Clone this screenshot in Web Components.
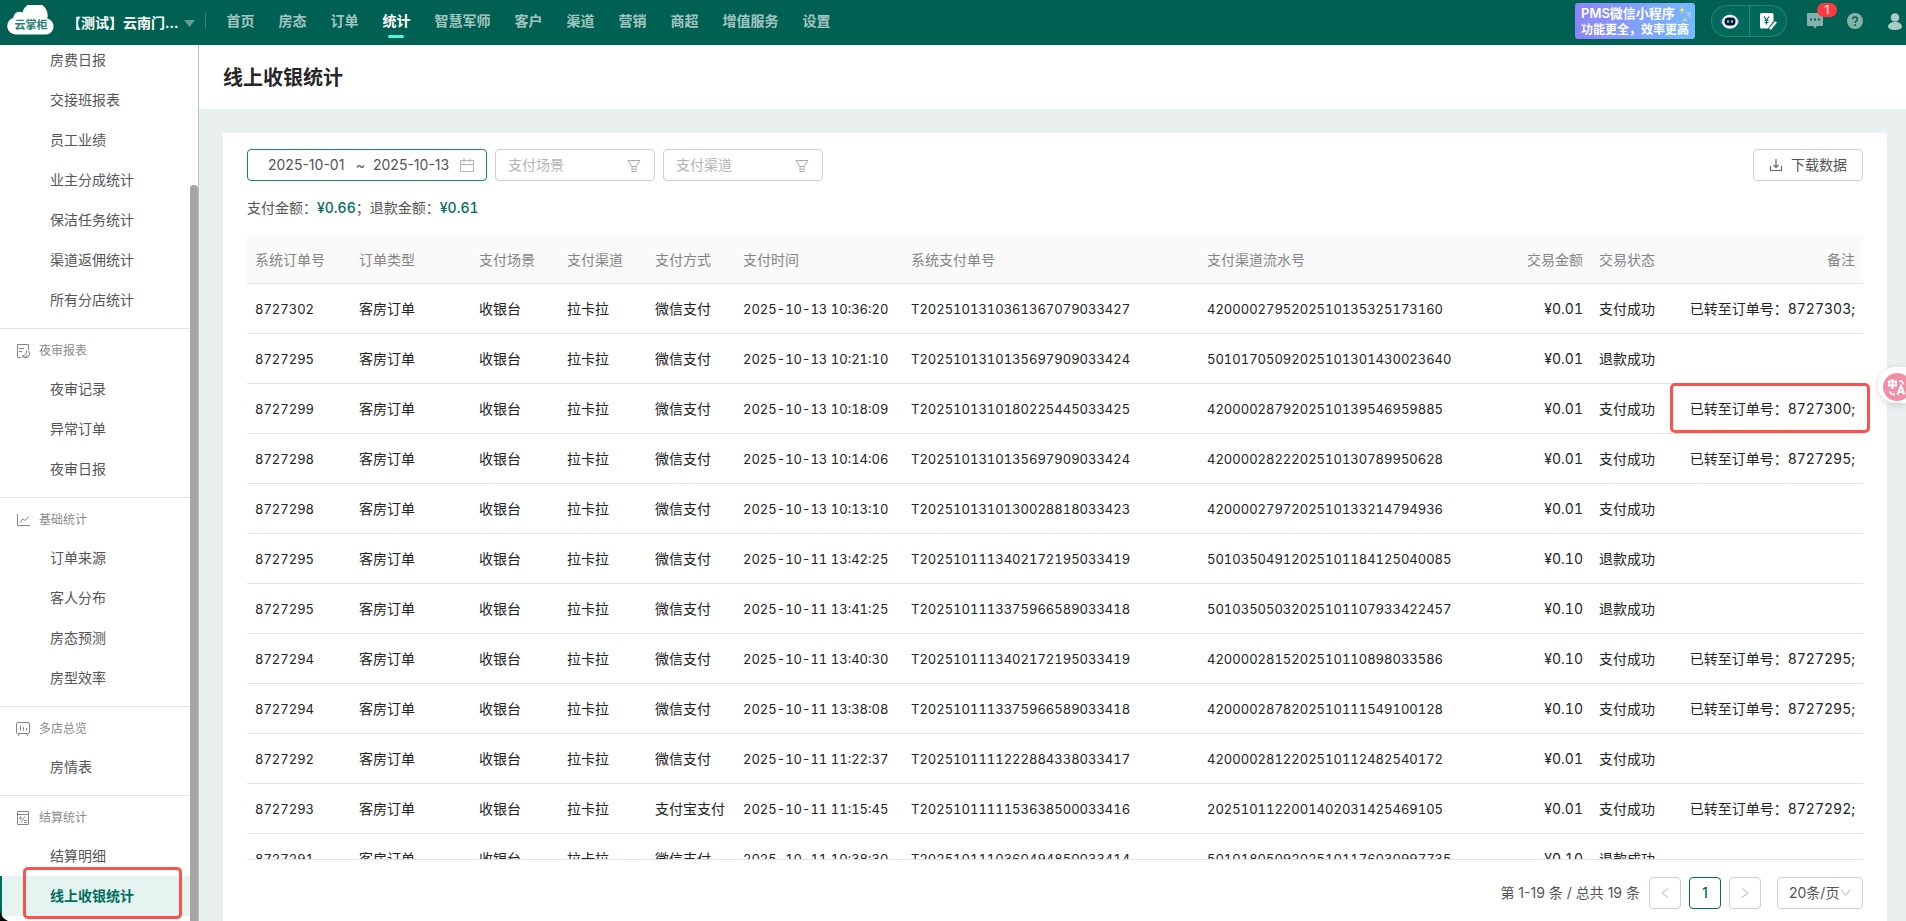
<!DOCTYPE html>
<html lang="zh-CN">
<head>
<meta charset="utf-8">
<title>线上收银统计</title>
<style>
  html, body { margin: 0; height: 100%; }
  body {
    font: 14px/22px Inter, "Noto Sans CJK SC", sans-serif;
    color: #222;
    --brand: #006152;
    --accent: #006e5d;
    --line: #e3e3e3;
    --edge: #cfcfcf;
    --mark: #ff514b;
    overflow: hidden;
  }
</style>
</head>
<body>
<pms-app></pms-app>

<template id="t-app">
  <style>
    :host { display: flex; flex-direction: column; height: 100vh; overflow: hidden; position: relative; }
    .body { flex: 1; min-height: 0; display: flex; }
    main { flex: 1; min-width: 0; display: flex; flex-direction: column; background: #eaf0f0; }
    h1 { box-sizing: border-box; margin: 0; height: 64px; padding: 1px 24px 0; background: #fff; font-size: 20px; line-height: 64px; font-weight: 600; color: #262626; }
    pms-report { flex: 1; min-height: 0; margin: 24px 19px 0 24px; }
    pms-translate { position: absolute; right: 0; top: 367px; }
    .corner { position: absolute; left: 0; bottom: 0; display: block; }
  </style>
  <pms-header></pms-header>
  <div class="body">
    <pms-sidebar></pms-sidebar>
    <main>
      <h1>线上收银统计</h1>
      <pms-report></pms-report>
    </main>
  </div>
  <pms-translate></pms-translate>
  <svg class="corner" width="8" height="11" aria-hidden="true"><path d="M0 0Q1 8 8 11H0Z" fill="#000a0a"/></svg>
</template>

<template id="t-header">
  <style>
    :host { display: flex; align-items: center; height: 45px; flex: none; background: var(--brand); color: #fff; position: relative; overflow: hidden; }
    a { color: inherit; text-decoration: none; }
    .logo { display: block; margin-left: 7px; width: 48px; height: 30px; margin-top: -5px; }
    .logo svg { display: block; }
    .store { all: unset; cursor: pointer; display: flex; align-items: center; gap: 6px; margin-left: 12px; height: 41px; font-weight: 600; }
    .store svg { margin-top: 1px; }
    .sep { width: 1px; height: 16px; background: rgba(255,255,255,.2); margin: -4px 20px 0 10px; }
    nav { display: flex; gap: 24px; align-self: stretch; }
    .right { margin-left: auto; display: flex; align-items: center; height: 42px; align-self: flex-start; }
    .promo { box-sizing: border-box; width: 120px; height: 36px; border-radius: 3px; padding: 2px 0 0 6px; background: linear-gradient(90deg, #8f83fb, #74bafd); position: relative; font-weight: 600; white-space: nowrap; }
    .promo span { display: block; font-size: 12px; line-height: 15px; }
    .promo span:first-child { font-size: 13px; line-height: 17px; }
    .promo svg { position: absolute; right: 4px; top: 2px; }
    .pill { box-sizing: border-box; display: flex; width: 76px; height: 32px; border: 1px solid rgba(255,255,255,.16); border-radius: 16px; background: rgba(0,120,100,.35); margin-left: 16px; }
    button { all: unset; cursor: pointer; display: flex; align-items: center; justify-content: center; }
    .pill button { flex: 1; }
    .pill button + button { border-left: 1px solid rgba(255,255,255,.16); }
    .icon { opacity: .62; }
    .msg { position: relative; margin-left: 20px; }
    .badge { position: absolute; left: 10px; top: -10px; width: 20px; height: 14px; border-radius: 7px; background: #ff3b42; font-size: 12px; line-height: 14px; text-align: center; }
    .help { margin-left: 24px; }
    .user { margin: 0 4px 0 25px; }
  </style>
  <a class="logo" href="#" aria-label="云掌柜">
    <svg width="48" height="30" viewBox="0 0 48 30"><path d="M8.500 29.500A8.500 8.500 0 0 1 6.500 12.800 6 6 0 0 1 15.500 7.500 12.500 12.500 0 0 1 40.300 13.500 8.200 8.200 0 0 1 40 29.500Z" fill="#fff"/><text x="24" y="24" text-anchor="middle" font-size="11" font-weight="600" fill="#2b7e72">云掌柜</text></svg>
  </a>
  <button class="store">【测试】云南门...<svg width="11" height="7"><path d="M0 0H11L5.500 7Z" fill="#619d94"/></svg></button>
  <div class="sep"></div>
  <nav>
    <pms-tab>首页</pms-tab><pms-tab>房态</pms-tab><pms-tab>订单</pms-tab><pms-tab active>统计</pms-tab><pms-tab>智慧军师</pms-tab><pms-tab>客户</pms-tab><pms-tab>渠道</pms-tab><pms-tab>营销</pms-tab><pms-tab>商超</pms-tab><pms-tab>增值服务</pms-tab><pms-tab>设置</pms-tab>
  </nav>
  <div class="right">
    <a class="promo" href="#"><span>PMS微信小程序</span><span>功能更全，效率更高</span>
      <svg width="12" height="18"><path d="M3 1 4 4 6 5 4 6 3 9 2 6 0 5 2 4Z" fill="#f0e35c"/><path d="M6 12 7 14 9 15 7 16 6 17 5 16 3 15 5 14Z" fill="#c8d68e"/><path d="M7 7h5v6q-3-1-5-6Z" fill="#fff" opacity=".25"/></svg>
    </a>
    <div class="pill">
      <button aria-label="智能助手"><svg width="20" height="18" viewBox="0 0 20 18"><path d="M10 0v4" stroke="#2b6ea8" stroke-width="1.500"/><rect x="0.500" y="6.500" width="4" height="6" rx="2" fill="#4a63e0"/><rect x="15.500" y="6.500" width="4" height="6" rx="2" fill="#4a63e0"/><ellipse cx="10" cy="9.700" rx="8" ry="7" fill="#f4f6ff"/><rect x="4.500" y="5.500" width="11" height="8" rx="4" fill="#08122e"/><rect x="7" y="8" width="2" height="3" rx="1" fill="#4fe6e0"/><rect x="11" y="8" width="2" height="3" rx="1" fill="#4fe6e0"/></svg></button>
      <button aria-label="记一笔"><svg width="18" height="18" viewBox="0 0 18 18"><path d="M2.500 1H13a1.500 1.500 0 0 1 1.500 1.500V9L9 16.500H2.500A1.500 1.500 0 0 1 1 15V2.500A1.500 1.500 0 0 1 2.500 1Z" fill="#fff"/><path d="M5 4.500 7.500 8 10 4.500M7.500 8V12.500M5.500 8.500H9.500M5.500 10.500H9.500" stroke="#006e5d" stroke-width="1.200" fill="none"/><path d="M17 10.500 12 16.500" stroke="#006c5b" stroke-width="5"/><path d="M16.500 10.500 11.500 16.500" stroke="#fff" stroke-width="2.200" stroke-linecap="round"/></svg></button>
    </div>
    <button class="msg" aria-label="消息，1条未读"><svg class="icon" width="16" height="16"><path fill-rule="evenodd" d="M1 0H15a1 1 0 0 1 1 1V12a1 1 0 0 1-1 1H10L8 15.500 6 13H1a1 1 0 0 1-1-1V1A1 1 0 0 1 1 0ZM3 5.500v2h2v-2ZM7 5.500v2h2v-2ZM11 5.500v2h2v-2Z" fill="#d5e5e2"/></svg><span class="badge">1</span></button>
    <button class="help" aria-label="帮助"><svg class="icon" width="16" height="16"><circle cx="8" cy="8" r="8" fill="#d5e5e2"/><path d="M5.700 6.200a2.300 2.300 0 1 1 3.500 2Q8 8.900 8 10" fill="none" stroke="#006152" stroke-width="1.500"/><circle cx="8" cy="12" r="1" fill="#006152"/></svg></button>
    <button class="user" aria-label="账户"><svg width="14" height="17"><circle cx="7" cy="4.500" r="4.300" fill="#a9cbc6"/><path d="M0 14q0-3.500 4.500-5h5q4.500 1.500 4.500 5Q13 17 7 17T0 14Z" fill="#a9cbc6"/></svg></button>
  </div>
</template>

<template id="t-tab">
  <style>
    :host { display: flex; color: rgba(255,255,255,.65); font-weight: 600; }
    a { color: inherit; text-decoration: none; position: relative; line-height: 42px; white-space: nowrap; }
    :host([active]) { color: #fff; }
    :host([active]) a::after { content: ""; position: absolute; left: 50%; top: 35px; width: 16px; height: 3px; margin-left: -8px; border-radius: 2px; background: #4ff2dc; }
  </style>
  <a href="#"><slot></slot></a>
</template>

<template id="t-sidebar">
  <style>
    :host { box-sizing: border-box; width: 199px; flex: none; display: flex; background: #fff; border-right: 1px solid #bdbdbd; overflow: hidden; }
    nav { flex: 1; display: flex; flex-direction: column; justify-content: flex-end; padding-bottom: 5px; min-width: 0; }
    .track { width: 8px; display: flex; flex-direction: column; justify-content: flex-end; }
    .thumb { height: 84%; background: #a5a5a5; border-radius: 4px 4px 0 0; }
  </style>
  <nav aria-label="统计">
    <pms-group>
      <pms-item>房费日报</pms-item><pms-item>交接班报表</pms-item><pms-item>员工业绩</pms-item><pms-item>业主分成统计</pms-item><pms-item>保洁任务统计</pms-item><pms-item>渠道返佣统计</pms-item><pms-item>所有分店统计</pms-item>
    </pms-group>
    <pms-group heading="夜审报表">
      <svg slot="icon" width="14" height="14" fill="none" stroke="#858585"><path d="M5 13.500H1.500V.5h11V6M3 4.500h5M3 7.500h3"/><path d="M10.500 6.500q1 4-4.500 5.500 1.500 2 5 1.500Q15 11 12.500 7M7.500 13.500q3 0 4-2.500"/></svg>
      <pms-item>夜审记录</pms-item><pms-item>异常订单</pms-item><pms-item>夜审日报</pms-item>
    </pms-group>
    <pms-group heading="基础统计">
      <svg slot="icon" width="14" height="14" fill="none" stroke="#858585"><path d="M1.500 1V12.500H14M4 9.500 6.500 6 9 7.500 12.500 3.500"/></svg>
      <pms-item>订单来源</pms-item><pms-item>客人分布</pms-item><pms-item>房态预测</pms-item><pms-item>房型效率</pms-item>
    </pms-group>
    <pms-group heading="多店总览">
      <svg slot="icon" width="14" height="14" fill="none" stroke="#858585"><rect x=".5" y=".5" width="13" height="11" rx="1.500"/><path d="M4.500 3.500v5M7.500 5v3.500M10.500 6v2.500M4 11.500 2 14M10 11.500 12 14"/></svg>
      <pms-item>房情表</pms-item>
    </pms-group>
    <pms-group heading="结算统计">
      <svg slot="icon" width="14" height="14" fill="none" stroke="#858585"><path d="M1.500 .5h11v13h-11ZM1.500 3.500h11M9 5.500 5 11.500M3 7h3M4.500 5.500v3M8 9.500h3M8 11.500h3"/></svg>
      <pms-item>结算明细</pms-item><pms-item active>线上收银统计</pms-item>
    </pms-group>
  </nav>
  <div class="track"><div class="thumb"></div></div>
</template>

<template id="t-group">
  <style>
    :host { display: block; flex: none; padding-bottom: 8px; }
    :host(:last-child) { padding-bottom: 0; }
    :host([heading]) { border-top: 1px solid var(--line); }
    h2 { display: none; box-sizing: border-box; margin: 0; height: 40px; padding: 4px 0 0 16px; align-items: center; gap: 9px; font-size: 12px; line-height: 36px; font-weight: 400; color: #8a8a8a; }
    :host([heading]) h2 { display: flex; }
  </style>
  <h2><slot name="icon"></slot><span></span></h2>
  <slot></slot>
</template>

<template id="t-item">
  <style>
    :host { display: block; height: 40px; position: relative; box-sizing: border-box; }
    a { display: block; padding-left: 50px; line-height: 40px; color: #555; text-decoration: none; }
    :host([active]) { background: #e5f4f1; box-shadow: inset 2px 0 var(--accent); }
    :host([active]) a { color: var(--accent); font-weight: 600; }
    :host([active])::after { content: ""; position: absolute; box-sizing: border-box; inset: -9px 8px -3px 23px; border: 3px solid var(--mark); border-radius: 5px; }
  </style>
  <a href="#"><slot></slot></a>
</template>

<template id="t-report">
  <style>
    :host { box-sizing: border-box; display: flex; flex-direction: column; background: #fff; padding: 16px 24px 12px; }
    .filters { display: flex; gap: 8px; }
    .download { margin-left: auto; box-sizing: border-box; height: 32px; padding: 0 15px; display: flex; align-items: center; gap: 8px; font: inherit; color: #555; background: #fff; border: 1px solid var(--edge); border-radius: 4px; cursor: pointer; }
    .sum { margin: 16px 0; color: #555; font-variant-numeric: tabular-nums; }
    .sum b { color: var(--accent); font-weight: 500; }
    pms-table { flex: 1; min-height: 0; }
  </style>
  <div class="filters">
    <pms-range></pms-range>
    <pms-select label="支付场景"></pms-select>
    <pms-select label="支付渠道"></pms-select>
    <button class="download"><svg width="14" height="14" fill="none" stroke="#666" stroke-width="1.200"><path d="M1.500 8v4.500h11V8M7 1v8M4.500 7 7 9.500 9.500 7"/></svg>下载数据</button>
  </div>
  <div class="sum">支付金额：<b>¥0.66</b>；退款金额：<b>¥0.61</b></div>
  <pms-table></pms-table>
  <pms-pager></pms-pager>
</template>

<template id="t-range">
  <style>
    :host { box-sizing: border-box; display: flex; align-items: center; width: 240px; height: 32px; border: 1px solid #118672; border-radius: 4px; padding: 0 12px 0 20px; }
    input { all: unset; width: 80px; font: inherit; color: #555; }
    span { width: 25px; text-align: center; color: #555; }
    svg { margin-left: auto; }
  </style>
  <input aria-label="开始日期" value="2025-10-01"><span>~</span><input aria-label="结束日期" value="2025-10-13">
  <svg width="14" height="14" fill="none" stroke="#b5b5b5"><path d="M.5 2.500h13v11H.5ZM.5 6.500h13M4 0v4.500M10 0v4.500"/></svg>
</template>

<template id="t-select">
  <style>
    :host { display: block; position: relative; width: 160px; height: 32px; }
    select { appearance: none; box-sizing: border-box; width: 100%; height: 32px; padding: 0 12px; font: inherit; color: #b3b3b3; background: #fff; border: 1px solid var(--edge); border-radius: 4px; }
    svg { position: absolute; right: 14px; top: 11px; pointer-events: none; }
  </style>
  <select><option></option></select>
  <svg width="14" height="12" fill="none" stroke="#ababab"><path d="M1 .5H13L9 6.500H5ZM5 6.500V11.500H9V6.500M5 9h4"/></svg>
</template>

<template id="t-table">
  <style>
    :host { display: block; box-sizing: border-box; overflow: hidden; padding-right: 8px; margin-right: -8px; font-variant-numeric: tabular-nums; }
    table { width: 100%; table-layout: fixed; border-collapse: separate; border-spacing: 0; }
    th, td { box-sizing: border-box; height: 50px; padding: 0 8px; border-bottom: 1px solid var(--line); text-align: left; font-weight: 400; white-space: nowrap; }
    th { background: #fafafa; color: #858585; height: 49px; padding-top: 2px; }
    .code { font-size: 13px; }
    .num, .note { text-align: right; }
    .note { position: relative; }
    .marked::after { content: ""; position: absolute; inset: -1px -7px 0 auto; width: 200px; box-sizing: border-box; border: 3px solid var(--mark); border-radius: 5px; }
    .c1 { width: 104px; } .c2 { width: 120px; } .c3 { width: 88px; } .c4 { width: 168px; } .c5 { width: 296px; } .c6 { width: 96px; }
  </style>
  <table>
    <colgroup><col class="c1"><col class="c2"><col class="c3"><col class="c3"><col class="c3"><col class="c4"><col class="c5"><col class="c5"><col class="c6"><col class="c3"><col></colgroup>
    <thead><tr><th>系统订单号</th><th>订单类型</th><th>支付场景</th><th>支付渠道</th><th>支付方式</th><th>支付时间</th><th>系统支付单号</th><th>支付渠道流水号</th><th class="num">交易金额</th><th>交易状态</th><th class="note">备注</th></tr></thead>
    <tbody></tbody>
  </table>
</template>

<template id="t-pager">
  <style>
    :host { display: flex; align-items: center; justify-content: flex-end; height: 32px; flex: none; color: #555; border-top: 1px solid var(--line); padding-top: 17px; }
    .total { margin-right: 9px; }
    button { box-sizing: border-box; width: 32px; height: 32px; margin-right: 8px; padding: 0; font: inherit; display: flex; align-items: center; justify-content: center; background: #fff; border: 1px solid var(--edge); border-radius: 4px; }
    .on { color: var(--accent); border-color: var(--accent); font-weight: 500; }
    .size { position: relative; margin-left: 8px; }
    select { appearance: none; box-sizing: border-box; display: block; width: 86px; height: 32px; padding: 0 0 0 11px; font: inherit; color: #555; background: #fff; border: 1px solid var(--edge); border-radius: 4px; }
    .size svg { position: absolute; right: 12px; top: 12px; pointer-events: none; }
  </style>
  <span class="total">第 1-19 条 / 总共 19 条</span>
  <button aria-label="上一页" disabled><svg width="8" height="10" fill="none" stroke="#b5b5b5"><path d="M7 .5 1 5 7 9.500"/></svg></button>
  <button class="on">1</button>
  <button aria-label="下一页" disabled><svg width="8" height="10" fill="none" stroke="#b5b5b5"><path d="M1 .5 7 5 1 9.500"/></svg></button>
  <div class="size"><select aria-label="每页条数"><option>20条/页</option></select><svg width="11" height="8" fill="none" stroke="#b5b5b5"><path d="M1 1 5.500 6.500 10 1"/></svg></div>
</template>

<template id="t-translate">
  <style>
    :host { display: block; }
    button { all: unset; box-sizing: border-box; display: block; width: 28px; height: 36px; padding: 4px 0 0 5px; background: #fff; border-radius: 18px 0 0 18px; box-shadow: 0 2px 8px rgba(0,0,0,.14); overflow: hidden; cursor: pointer; }
    svg { display: block; }
  </style>
  <button aria-label="翻译"><svg width="28" height="28"><circle cx="14" cy="14" r="14" fill="#f08fa5"/><g fill="none" stroke="#fff" stroke-width="2"><path d="M6 8.500h7v4H6ZM9.500 6v10"/><path d="M16 8q4-.5 4.500 3.500M7 18q.5 4 5 3.500" stroke-width="1.800"/><path d="M14.500 21.500 18 13 21.500 21.500M16 19h4"/></g></svg></button>
</template>

<script>
  const define = (name, ready) => customElements.define('pms-' + name, class extends HTMLElement {
    constructor() {
      super();
      this.attachShadow({ mode: 'open' }).append(document.getElementById('t-' + name).content.cloneNode(true));
    }
    connectedCallback() { if (ready) ready(this, this.shadowRoot); }
  });

  // order no., method, time, payment no., channel serial no., amount, state, transferred-to order, highlighted?
  const rows = [
    ['8727302', '微信支付', '2025-10-13 10:36:20', 'T2025101310361367079033427', '4200002795202510135325173160', '¥0.01', '支付成功', '8727303'],
    ['8727295', '微信支付', '2025-10-13 10:21:10', 'T2025101310135697909033424', '50101705092025101301430023640', '¥0.01', '退款成功', ''],
    ['8727299', '微信支付', '2025-10-13 10:18:09', 'T2025101310180225445033425', '4200002879202510139546959885', '¥0.01', '支付成功', '8727300', true],
    ['8727298', '微信支付', '2025-10-13 10:14:06', 'T2025101310135697909033424', '4200002822202510130789950628', '¥0.01', '支付成功', '8727295'],
    ['8727298', '微信支付', '2025-10-13 10:13:10', 'T2025101310130028818033423', '4200002797202510133214794936', '¥0.01', '支付成功', ''],
    ['8727295', '微信支付', '2025-10-11 13:42:25', 'T2025101113402172195033419', '50103504912025101184125040085', '¥0.10', '退款成功', ''],
    ['8727295', '微信支付', '2025-10-11 13:41:25', 'T2025101113375966589033418', '50103505032025101107933422457', '¥0.10', '退款成功', ''],
    ['8727294', '微信支付', '2025-10-11 13:40:30', 'T2025101113402172195033419', '4200002815202510110898033586', '¥0.10', '支付成功', '8727295'],
    ['8727294', '微信支付', '2025-10-11 13:38:08', 'T2025101113375966589033418', '4200002878202510111549100128', '¥0.10', '支付成功', '8727295'],
    ['8727292', '微信支付', '2025-10-11 11:22:37', 'T2025101111222884338033417', '4200002812202510112482540172', '¥0.01', '支付成功', ''],
    ['8727293', '支付宝支付', '2025-10-11 11:15:45', 'T2025101111153638500033416', '2025101122001402031425469105', '¥0.01', '支付成功', '8727292'],
    ['8727291', '微信支付', '2025-10-11 10:38:30', 'T2025101110360494850033414', '50101805092025101176030997735', '¥0.10', '退款成功', '']
  ];

  define('tab');
  define('item');
  define('group', (el, root) => { root.querySelector('span').textContent = el.getAttribute('heading') || ''; });
  define('select', (el, root) => {
    const label = el.getAttribute('label');
    root.querySelector('select').setAttribute('aria-label', label);
    root.querySelector('option').textContent = label;
  });
  define('range');
  define('table', (el, root) => {
    root.querySelector('tbody').innerHTML = rows.map(([no, method, time, pay, serial, amount, state, to, marked]) =>
      `<tr><td class="code">${no}</td><td>客房订单</td><td>收银台</td><td>拉卡拉</td><td>${method}</td><td class="code">${time}</td><td class="code">${pay}</td><td class="code">${serial}</td>` +
      `<td class="num">${amount}</td><td>${state}</td><td class="note${marked ? ' marked' : ''}">${to ? `已转至订单号：${to};` : ''}</td></tr>`).join('');
  });
  define('pager');
  define('report');
  define('sidebar');
  define('header');
  define('translate');
  define('app');
</script>
</body>
</html>
